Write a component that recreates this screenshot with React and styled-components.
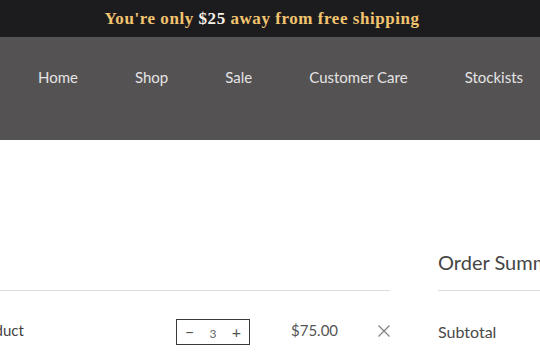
import React from 'react';
import styled, {createGlobalStyle} from 'styled-components';

const GlobalStyle = createGlobalStyle`
    html, body {
        margin: 0;
        padding: 0;
        background: #ffffff;
        overflow: hidden;
    }
    body {
        font-family: Lato, "Open Sans", sans-serif;
        width: 540px;
        height: 360px;
    }
`;

const Page = styled.div`
    display: flex;
    flex-direction: column;
    width: 540px;
    overflow: hidden;
`;

const Banner = styled.div`
    height: 37px;
    box-sizing: border-box;
    padding-right: 16px;
    background-color: #1c1c1e;
    display: flex;
    align-items: center;
    justify-content: center;
    font-family: "Liberation Serif", serif;
    font-weight: 700;
    font-size: 17px;
    color: #f2c470;
    letter-spacing: 0.55px;
`;

const Amount = styled.span`
    color: #f6f1e6;
`;

const Nav = styled.nav`
    height: 103px;
    box-sizing: border-box;
    background-color: #545253;
    display: flex;
    align-items: flex-start;
    gap: 57px;
    padding: 30px 0 0 38px;
    white-space: nowrap;
`;

const NavLink = styled.a`
    color: #e4e4e4;
    font-size: 15px;
    line-height: 20px;
    text-decoration: none;
`;

const Main = styled.main`
    display: flex;
    gap: 48px;
    padding-top: 110px;
    margin-left: -40px;
`;

const CartColumn = styled.section`
    width: 430px;
    flex-shrink: 0;
`;

const SummaryColumn = styled.section`
    width: 240px;
    flex-shrink: 0;
`;

const ColumnHeader = styled.div`
    height: 24px;
    padding-bottom: 16px;
    border-bottom: 1px solid #dcdcdc;
    font-size: 20px;
    line-height: 24px;
    color: #464646;
    white-space: nowrap;
`;

const CartRow = styled.div`
    display: flex;
    align-items: center;
    padding: 28px 0 0 12px;
`;

const ProductName = styled.div`
    width: 204px;
    margin-bottom: 4px;
    font-size: 15px;
    color: #444;
`;

const Quantity = styled.div`
    width: 74px;
    height: 26px;
    box-sizing: border-box;
    border: 1px solid #3a3a3a;
    display: flex;
    align-items: center;
    justify-content: space-between;
    padding: 0 8px;
    color: #555;
`;

const QtyButton = styled.span`
    font-size: 16px;
    line-height: 1;
    color: #555;
`;

const QtyValue = styled.span`
    font-size: 12px;
    color: #666;
    padding-top: 2px;
`;

const Price = styled.div`
    margin: 0 0 4px 41px;
    font-size: 15px;
    color: #555;
`;

const RemoveButton = styled.button`
    margin: -3px 0 0 auto;
    border: none;
    background: none;
    padding: 0;
    width: 12px;
    height: 12px;
    display: flex;
    cursor: pointer;
`;

const SummaryRow = styled.div`
    padding-top: 31px;
    font-size: 16px;
    color: #4a4a4a;
`;

const CloseIcon = () => (
    <svg width="12" height="12" viewBox="0 0 12 12">
        <path d="M0.5 0.5 L11.5 11.5 M11.5 0.5 L0.5 11.5" stroke="#808080" strokeWidth="1.2" fill="none"/>
    </svg>
);

const navItems = ['Home', 'Shop', 'Sale', 'Customer Care', 'Stockists'];

export default function App() {
    return (
        <Page>
            <GlobalStyle/>
            <Banner>
                <span>You're only <Amount>$25</Amount> away from free shipping</span>
            </Banner>
            <Nav>
                {navItems.map(item => <NavLink key={item} href="#">{item}</NavLink>)}
            </Nav>
            <Main>
                <CartColumn>
                    <ColumnHeader/>
                    <CartRow>
                        <ProductName>Product</ProductName>
                        <Quantity>
                            <QtyButton>−</QtyButton>
                            <QtyValue>3</QtyValue>
                            <QtyButton>+</QtyButton>
                        </Quantity>
                        <Price>$75.00</Price>
                        <RemoveButton aria-label="Remove"><CloseIcon/></RemoveButton>
                    </CartRow>
                </CartColumn>
                <SummaryColumn>
                    <ColumnHeader>Order Summary</ColumnHeader>
                    <SummaryRow>Subtotal</SummaryRow>
                </SummaryColumn>
            </Main>
        </Page>
    );
}
